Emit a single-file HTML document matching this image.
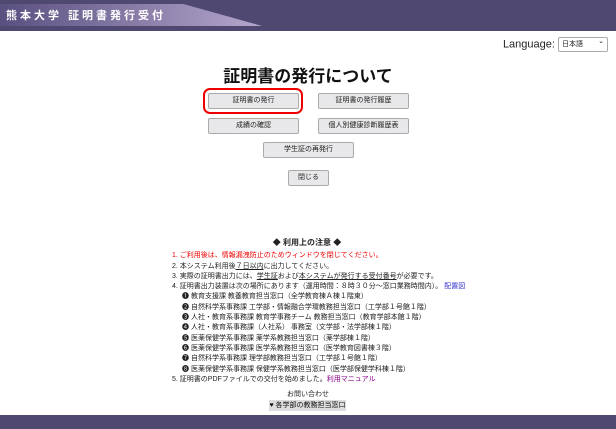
<!DOCTYPE html><html><head><meta charset="utf-8"><style>
body{margin:0;width:616px;height:429px;position:relative;background:#fff;font-family:"Liberation Sans","Noto Sans CJK JP",sans-serif;overflow:hidden;}
.hdr{position:absolute;left:0;top:0;width:616px;height:31px;background:#4f4870;}
.hdr .band{position:absolute;left:0;top:4px;width:262px;height:22px;background:linear-gradient(90deg,#5a5080,#b4a6cc);clip-path:polygon(0 0,70% 0,100% 100%,0 100%);}
.hdr .t{position:absolute;left:6px;top:7px;color:#fff;font-size:11px;font-weight:bold;letter-spacing:3px;}
.lang{position:absolute;right:8px;top:37px;font-size:11px;color:#222;}
.lang span{display:inline-block;width:42px;height:11px;border:1px solid #aaa;border-radius:2px;font-size:7px;vertical-align:middle;padding:1px 3px;position:relative}
.lang span:after{content:"⌄";position:absolute;right:3px;top:-1px;font-size:7px}
h1{position:absolute;top:62px;left:0;width:616px;text-align:center;margin:0;font-size:17px;font-weight:bold;color:#111;}
.b{position:absolute;height:14px;background:#e8e8ea;border:1px solid #aaa;border-radius:2px;font-size:7px;text-align:center;line-height:14px;color:#222;}
.oval{position:absolute;left:203px;top:88px;width:96px;height:22px;border:2px solid #e00;border-radius:7px;}
.notes{position:absolute;left:172px;top:238px;font-size:7px;line-height:10.3px;color:#222;}
.notes .ti{text-align:center;font-weight:bold;font-size:8px;margin-left:0;width:270px;margin-bottom:3px}
.in{padding-left:10px}
a{color:#33c}
.foot{position:absolute;left:0;top:415px;width:616px;height:14px;background:#4f4870;}
.q{position:absolute;left:0;width:616px;text-align:center;font-size:7px;color:#222}
</style></head><body>
<div class="hdr"><div class="band"></div><div class="t">熊本大学 証明書発行受付</div></div>
<div class="lang">Language: <span>日本語</span></div>
<h1>証明書の発行について</h1>
<div class="oval"></div>
<div class="b" style="left:208px;top:93px;width:89px">証明書の発行</div>
<div class="b" style="left:318px;top:93px;width:89px">証明書の発行履歴</div>
<div class="b" style="left:208px;top:118px;width:89px">成績の確認</div>
<div class="b" style="left:318px;top:118px;width:89px">個人別健康診断履歴表</div>
<div class="b" style="left:263px;top:142px;width:89px">学生証の再発行</div>
<div class="b" style="left:288px;top:170px;width:39px">閉じる</div>
<div class="notes">
<div class="ti">◆ 利用上の注意 ◆</div>
<div style="color:#e00">1. ご利用後は、情報漏洩防止のためウィンドウを閉じてください。</div>
<div>2. 本システム利用後<u>７日以内</u>に出力してください。</div>
<div>3. 実際の証明書出力には、<u>学生証</u>および<u>本システムが発行する受付番号</u>が必要です。</div>
<div>4. 証明書出力装置は次の場所にあります（運用時間：８時３０分～窓口業務時間内）。 <a>配置図</a></div>
<div class="in">❶ 教育支援課 教養教育担当窓口（全学教育棟Ａ棟１階東）</div>
<div class="in">❷ 自然科学系事務課 工学部・情報融合学環教務担当窓口（工学部１号館１階）</div>
<div class="in">❸ 人社・教育系事務課 教育学事務チーム 教務担当窓口（教育学部本館１階）</div>
<div class="in">❹ 人社・教育系事務課（人社系） 事務室（文学部・法学部棟１階）</div>
<div class="in">❺ 医薬保健学系事務課 薬学系教務担当窓口（薬学部棟１階）</div>
<div class="in">❻ 医薬保健学系事務課 医学系教務担当窓口（医学教育図書棟３階）</div>
<div class="in">❼ 自然科学系事務課 理学部教務担当窓口（工学部１号館１階）</div>
<div class="in">❽ 医薬保健学系事務課 保健学系教務担当窓口（医学部保健学科棟１階）</div>
<div>5. 証明書のPDFファイルでの交付を始めました。<a style="color:#808">利用マニュアル</a></div>
</div>
<div class="q" style="top:389px">お問い合わせ</div>
<div style="position:absolute;left:269px;top:400px;width:77px;height:11px;background:#ddd;font-size:7px;text-align:center;line-height:11px;color:#111">♥ 各学部の教務担当窓口</div>
<div class="foot"></div>
</body></html>
